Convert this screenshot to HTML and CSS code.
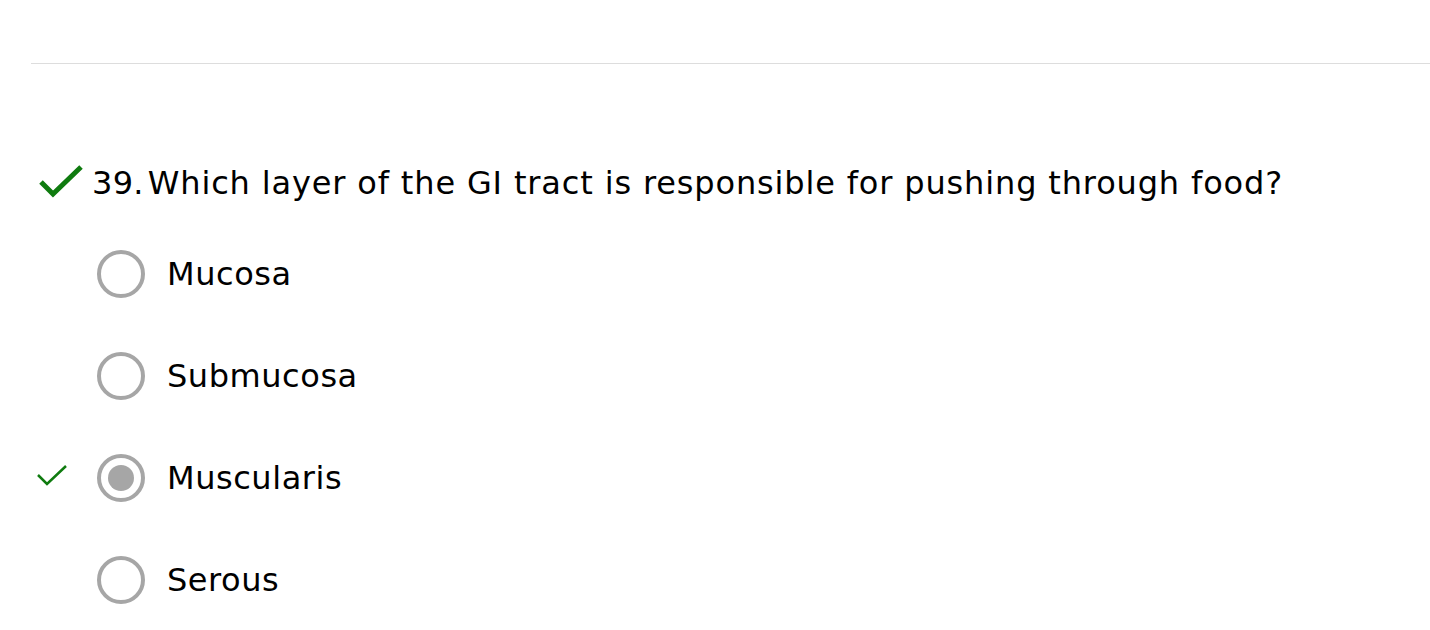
FILE: index.html
```html
<!DOCTYPE html>
<html>
<head>
<meta charset="utf-8">
<link rel="stylesheet" href="styles.css">
</head>
<body>
<div class="page">
  <div class="divider"></div>
  <div class="question">
    <svg class="big-check" width="44" height="34" viewBox="0 0 44 34"><path d="M2 18 L14 30 L42 3" fill="none" stroke="#0f7b0f" stroke-width="5"/></svg>
    <span class="qnum">39.</span>
    <span class="qtext">Which layer of the GI tract is responsible for pushing through food?</span>
  </div>
  <div class="options">
    <div class="option">
      <div class="mark"></div>
      <div class="radio"></div>
      <div class="label">Mucosa</div>
    </div>
    <div class="option">
      <div class="mark"></div>
      <div class="radio"></div>
      <div class="label">Submucosa</div>
    </div>
    <div class="option">
      <div class="mark"><svg class="small-check" width="30" height="24" viewBox="0 0 30 24"><path d="M1 12 L10 21 L29 3" fill="none" stroke="#0f7b0f" stroke-width="2.5"/></svg></div>
      <div class="radio checked"></div>
      <div class="label">Muscularis</div>
    </div>
    <div class="option">
      <div class="mark"></div>
      <div class="radio"></div>
      <div class="label">Serous</div>
    </div>
  </div>
</div>
</body>
</html>
```
FILE: styles.css
```css
html, body {
  margin: 0;
  padding: 0;
  background: #fff;
  overflow: hidden;
}
body {
  font-family: "DejaVu Sans", Verdana, sans-serif;
  color: #000;
}
.page {
  padding-left: 31px;
}
.divider {
  height: 1px;
  background: #dddddd;
  margin-top: 63px;
}
.question {
  display: flex;
  align-items: center;
  margin-top: 99px;
  height: 40px;
  font-size: 32px;
  line-height: 40px;
}
.big-check {
  margin-left: 8px;
  margin-right: 9px;
  margin-top: -4px;
}
.qnum {
  margin-right: 4px;
  letter-spacing: 0.3px;
}
.qtext {
  letter-spacing: 0.85px;
}
.options {
  margin-top: 20px;
}
.option {
  display: flex;
  align-items: center;
  height: 102px;
}
.mark {
  width: 66px;
  display: flex;
  align-items: center;
}
.small-check {
  margin-left: 6px;
  margin-top: -6px;
}
.radio {
  width: 48px;
  height: 48px;
  box-sizing: border-box;
  border: 4px solid #a6a6a6;
  border-radius: 50%;
  display: flex;
  align-items: center;
  justify-content: center;
}
.radio.checked::after {
  content: "";
  width: 26px;
  height: 26px;
  border-radius: 50%;
  background: #a6a6a6;
}
.label {
  margin-left: 22px;
  font-size: 32px;
  line-height: 40px;
  letter-spacing: 0.55px;
}
```
